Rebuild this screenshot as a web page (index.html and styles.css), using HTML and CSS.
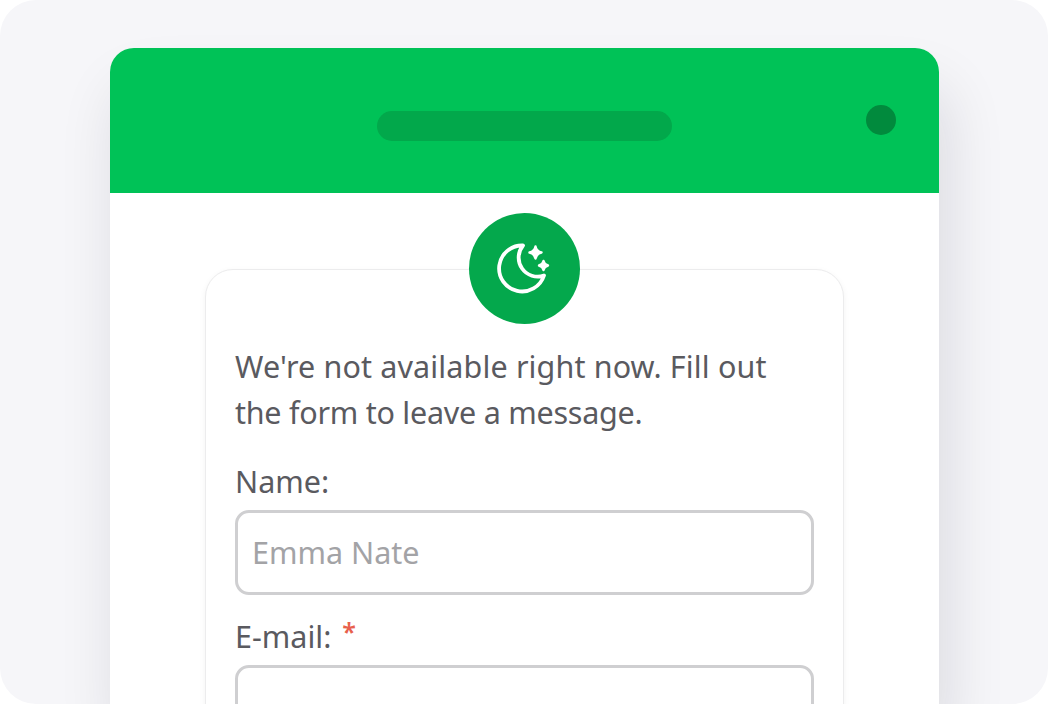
FILE: index.html
```html
<!DOCTYPE html>
<html lang="en">
<head>
    <meta charset="UTF-8">
    <meta name="viewport" content="width=device-width, initial-scale=1.0">
    <title>Offline message form</title>
    <link rel="stylesheet" href="styles.css">
</head>
<body>

    <div class="frame">
        <div class="widget">
            <div class="widget-header">
                <span></span>
                <div class="header-bar"></div>
                <div class="header-dot"></div>
            </div>
            <div class="widget-body">
                <div class="form-card">
                    <div class="moon-badge">
                        <svg width="56" height="56" viewBox="0 0 56 56" fill="none">
                            <path d="M26 4.500A23 23 0 1 0 47 34.500A19 19 0 0 1 26 4.500Z" stroke="#fff" stroke-width="3.800" stroke-linejoin="round"/>
                            <path d="M38.500 5.500C39.300 9.300 40.700 10.700 44.500 11.500C40.700 12.300 39.300 13.700 38.500 17.500C37.700 13.700 36.300 12.300 32.500 11.500C36.300 10.700 37.700 9.300 38.500 5.500Z" fill="#fff" stroke="#fff" stroke-width="2.400" stroke-linejoin="round"/>
                            <path d="M46.500 20C47 22.600 48.200 23.800 51 24.500C48.200 25.200 47 26.400 46.500 29C46 26.400 44.800 25.200 42 24.500C44.800 23.800 46 22.600 46.500 20Z" fill="#fff" stroke="#fff" stroke-width="2.400" stroke-linejoin="round"/>
                        </svg>
                    </div>
                    <p class="intro">We're not available right now. Fill out <span class="intro-end">the form to leave a message.</span></p>
                    <label class="field-label">Name:</label>
                    <div class="field-input placeholder">Emma Nate</div>
                    <label class="field-label">E-mail: <span class="required">*</span></label>
                    <div class="field-input"></div>
                </div>
            </div>
        </div>
    </div>

</body>
</html>
```

FILE: styles.css
```css
html, body {
    margin: 0;
    padding: 0;
    background-color: #fff;
}

body {
    font-family: "Noto Sans", "Open Sans", sans-serif;
    height: 706px;
    overflow: hidden;
}

.frame {
    height: 704px;
    padding: 48px 109px 0 110px;
    box-sizing: border-box;
    background-color: #f6f6f9;
    border-radius: 36px;
    overflow: hidden;
}

.widget {
    height: 657px;
    background-color: #fff;
    border-radius: 24px 24px 0 0;
    box-shadow: 8px 40px 60px rgba(20, 20, 40, 0.12);
    overflow: hidden;
}

.widget-header {
    display: grid;
    grid-template-columns: 1fr auto 1fr;
    align-items: center;
    height: 145px;
    padding-right: 43px;
    padding-left: 43px;
    background-color: #00c257;
}

.header-bar {
    width: 295px;
    height: 30px;
    margin-top: 11px;
    background-color: #02a84b;
    border-radius: 15px;
}

.header-dot {
    justify-self: end;
    width: 30px;
    height: 30px;
    margin-bottom: 1px;
    background-color: #018a3d;
    border-radius: 50%;
}

.widget-body {
    padding: 76px 95px 0;
}

.form-card {
    position: relative;
    height: 600px;
    padding: 73px 29px 0;
    box-sizing: border-box;
    background-color: #fff;
    border: 1px solid #ececed;
    border-radius: 28px;
    box-shadow: 0 2px 6px rgba(0, 0, 0, 0.05);
}

.moon-badge {
    position: absolute;
    top: -57px;
    left: 263px;
    display: flex;
    align-items: center;
    justify-content: center;
    width: 111px;
    height: 111px;
    background-color: #04a84c;
    border-radius: 50%;
}

.intro {
    margin: 0 0 24px;
    padding-right: 20px;
    font-size: 30.5px;
    line-height: 46px;
    color: #5a5a5f;
    letter-spacing: 0.13px;
}

.intro-end {
    letter-spacing: -0.25px;
}

.field-label {
    display: block;
    font-size: 30.5px;
    line-height: 45px;
    color: #5a5a5f;
}

.required {
    margin-left: 3px;
    font-size: 25px;
    font-weight: 600;
    line-height: 0;
    vertical-align: 7px;
    color: #e8604c;
}

.field-input {
    height: 79px;
    margin: 6px 0 19px;
    padding: 0 14px;
    border: 3px solid #cfcfd1;
    border-radius: 14px;
    font-size: 30.5px;
    line-height: 79px;
}

.placeholder {
    color: #a3a3a6;
}
```
